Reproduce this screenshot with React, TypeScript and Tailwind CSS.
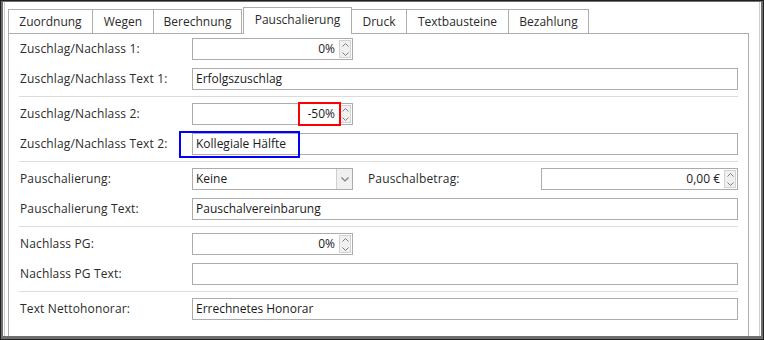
import React from "react";

const Up = () => (
  <svg width="7" height="4" viewBox="0 0 7 4">
    <path d="M0.5 3.5 L3.5 0.5 L6.5 3.5" stroke="#7c7c7c" strokeWidth="1" fill="none" />
  </svg>
);
const Down = () => (
  <svg width="7" height="4" viewBox="0 0 7 4">
    <path d="M0.5 0.5 L3.5 3.5 L6.5 0.5" stroke="#7c7c7c" strokeWidth="1" fill="none" />
  </svg>
);

const Spinner = () => (
  <div className="w-[12px] shrink-0 my-[1px] mr-[1px] border border-[#d2d2d2] bg-[#f0f0f0] flex flex-col items-center justify-center gap-[5px]">
    <Up />
    <Down />
  </div>
);

const NumberInput = ({ value, width, children }: { value: string; width: string; children?: React.ReactNode }) => (
  <div className={`relative h-[22px] border border-[#acacac] bg-white flex ${width}`}>
    <div className="flex-1 text-right pr-[4px] leading-[20px] text-[#1a1a1a]">{value}</div>
    <Spinner />
    {children}
  </div>
);

const TextInput = ({ value, children }: { value?: string; children?: React.ReactNode }) => (
  <div className="relative flex-1 h-[22px] border border-[#acacac] bg-white pl-[3px] leading-[20px] text-[#1a1a1a]">
    {value}
    {children}
  </div>
);

const Label = ({ children }: { children: React.ReactNode }) => (
  <div className="w-[173px] shrink-0 pl-[1px] text-[#2c2c2c] tracking-[0.15px]">{children}</div>
);

const Row = ({ children }: { children: React.ReactNode }) => (
  <div className="flex items-center h-[22px]">{children}</div>
);

const Sep = () => <div className="h-px bg-[#dcdcdc] mt-[6px] mb-[6px]" />;

const tabs: { name: string; w: string; ml: string; active?: boolean }[] = [
  { name: "Zuordnung", w: "w-[85px]", ml: "ml-0" },
  { name: "Wegen", w: "w-[62px]", ml: "-ml-px" },
  { name: "Berechnung", w: "w-[89px]", ml: "-ml-px" },
  { name: "Pauschalierung", w: "w-[109px]", ml: "ml-px", active: true },
  { name: "Druck", w: "w-[56px]", ml: "-ml-px" },
  { name: "Textbausteine", w: "w-[103px]", ml: "-ml-px" },
  { name: "Bezahlung", w: "w-[81px]", ml: "-ml-px" },
];

export default function App() {
  return (
    <div className="w-[764px] h-[340px] border border-[#202020] font-['Open_Sans',sans-serif] text-[12px] bg-white">
      <div className="w-full h-full border-t-[1px] border-l-[2px] border-r-[2px] border-b-[3px] border-[#6e6e6e] px-px flex">
        <div className="flex-1 border-x border-[#cdcdcd] bg-white flex flex-col overflow-hidden">
          <div className="pt-[5px] pl-[3px] flex items-end h-[31px]">
            {tabs.map((t) =>
              t.active ? (
                <div
                  key={t.name}
                  className={`relative z-10 ${t.w} ${t.ml} h-[27px] -mb-px border-x border-t border-[#adadad] bg-white flex items-center justify-center pb-[3px] text-[#2a2a2a]`}
                >
                  {t.name}
                </div>
              ) : (
                <div
                  key={t.name}
                  className={`${t.w} ${t.ml} h-[24px] border-x border-t border-[#adadad] bg-white flex items-center justify-center text-[#2a2a2a]`}
                >
                  {t.name}
                </div>
              )
            )}
          </div>
          <div className="flex-1 ml-[3px] mr-[10px] border-x border-t border-[#adadad] pt-[4px] pl-[10px] pr-[10px] flex flex-col">
            <div className="flex flex-col gap-[8px]">
              <Row>
                <Label>Zuschlag/Nachlass 1:</Label>
                <NumberInput value="0%" width="w-[161px]" />
              </Row>
              <Row>
                <Label>Zuschlag/Nachlass Text 1:</Label>
                <TextInput value="Erfolgszuschlag" />
              </Row>
            </div>
            <Sep />
            <div className="flex flex-col gap-[8px]">
              <Row>
                <Label>Zuschlag/Nachlass 2:</Label>
                <NumberInput value="-50%" width="w-[161px]">
                  <div className="absolute left-[105px] top-[-2px] w-[43px] h-[24px] border-2 border-[#ff0000]" />
                </NumberInput>
              </Row>
              <Row>
                <Label>Zuschlag/Nachlass Text 2:</Label>
                <TextInput value="Kollegiale Hälfte">
                  <div className="absolute left-[-14px] top-[-3px] w-[121px] h-[27px] border-2 border-[#0000ff]" />
                </TextInput>
              </Row>
            </div>
            <Sep />
            <div className="flex flex-col gap-[8px]">
              <Row>
                <Label>Pauschalierung:</Label>
                <div className="w-[161px] h-[22px] border border-[#acacac] bg-white flex">
                  <div className="flex-1 pl-[3px] leading-[20px] text-[#1a1a1a]">Keine</div>
                  <div className="w-[16px] border-l border-[#cfcfcf] bg-[#f0f0f0] flex items-center justify-center">
                    <svg width="8" height="5" viewBox="0 0 8 5">
                      <path d="M0.5 0.5 L4 4 L7.5 0.5" stroke="#7a7a7a" strokeWidth="1.1" fill="none" />
                    </svg>
                  </div>
                </div>
                <div className="flex-1 pl-[15px] text-[#2c2c2c] tracking-[0.15px]">Pauschalbetrag:</div>
                <NumberInput value="0,00 €" width="w-[197px]" />
              </Row>
              <Row>
                <Label>Pauschalierung Text:</Label>
                <TextInput value="Pauschalvereinbarung" />
              </Row>
            </div>
            <Sep />
            <div className="flex flex-col gap-[8px]">
              <Row>
                <Label>Nachlass PG:</Label>
                <NumberInput value="0%" width="w-[161px]" />
              </Row>
              <Row>
                <Label>Nachlass PG Text:</Label>
                <TextInput />
              </Row>
            </div>
            <Sep />
            <Row>
              <Label>Text Nettohonorar:</Label>
              <TextInput value="Errechnetes Honorar" />
            </Row>
          </div>
        </div>
      </div>
    </div>
  );
}
